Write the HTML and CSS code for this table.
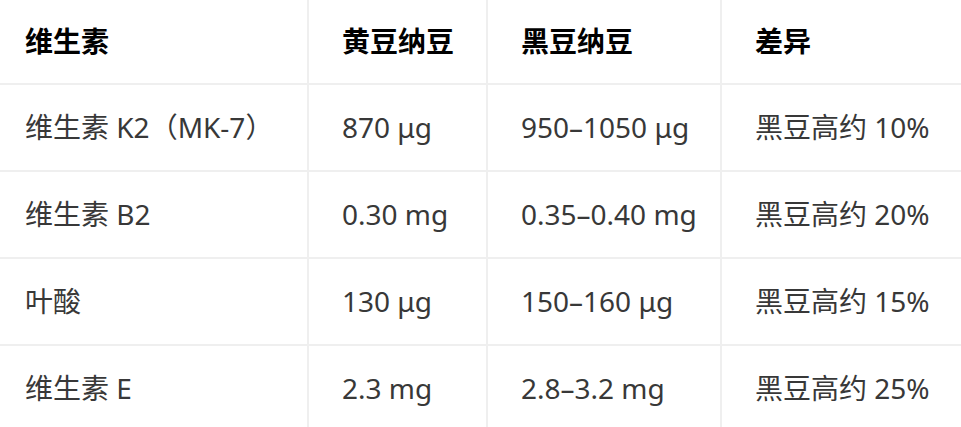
FILE: index.html
```html
<!DOCTYPE html>
<html lang="zh-CN">
<head>
<meta charset="utf-8">
<title>维生素对比</title>
<link rel="stylesheet" href="styles.css">
</head>
<body>
<table class="vt">
  <colgroup>
    <col class="c1"><col class="c2"><col class="c3"><col class="c4">
  </colgroup>
  <thead>
    <tr><th>维生素</th><th>黄豆纳豆</th><th>黑豆纳豆</th><th>差异</th></tr>
  </thead>
  <tbody>
    <tr><td>维生素 K2（MK-7）</td><td>870 μg</td><td>950–1050 μg</td><td>黑豆高约 10%</td></tr>
    <tr><td>维生素 B2</td><td>0.30 mg</td><td>0.35–0.40 mg</td><td>黑豆高约 20%</td></tr>
    <tr><td>叶酸</td><td>130 μg</td><td>150–160 μg</td><td>黑豆高约 15%</td></tr>
    <tr><td>维生素 E</td><td>2.3 mg</td><td>2.8–3.2 mg</td><td>黑豆高约 25%</td></tr>
  </tbody>
</table>
</body>
</html>
```
FILE: styles.css
```css
html, body {
  margin: 0;
  padding: 0;
  background: #ffffff;
}
body {
  font-family: "Noto Sans", "Noto Sans CJK SC", sans-serif;
  font-size: 28px;
  color: #383838;
}
.vt {
  border-collapse: collapse;
  table-layout: fixed;
  width: 962px;
}
.c1 { width: 308px; }
.c2 { width: 179px; }
.c3 { width: 234px; }
.c4 { width: 241px; }
.vt th, .vt td {
  text-align: left;
  line-height: 41px;
  padding: 22px 10px 22px 33px;
  border-bottom: 2px solid #efefef;
  border-left: 2px solid #efefef;
  white-space: nowrap;
  overflow: hidden;
}
.vt th {
  font-weight: 700;
  color: #000000;
  padding-top: 21px;
  padding-bottom: 21px;
}
.vt th:first-child, .vt td:first-child {
  border-left: none;
  padding-left: 25px;
}
.vt th:last-child, .vt td:last-child {
  border-right: 2px solid #efefef;
}
```
